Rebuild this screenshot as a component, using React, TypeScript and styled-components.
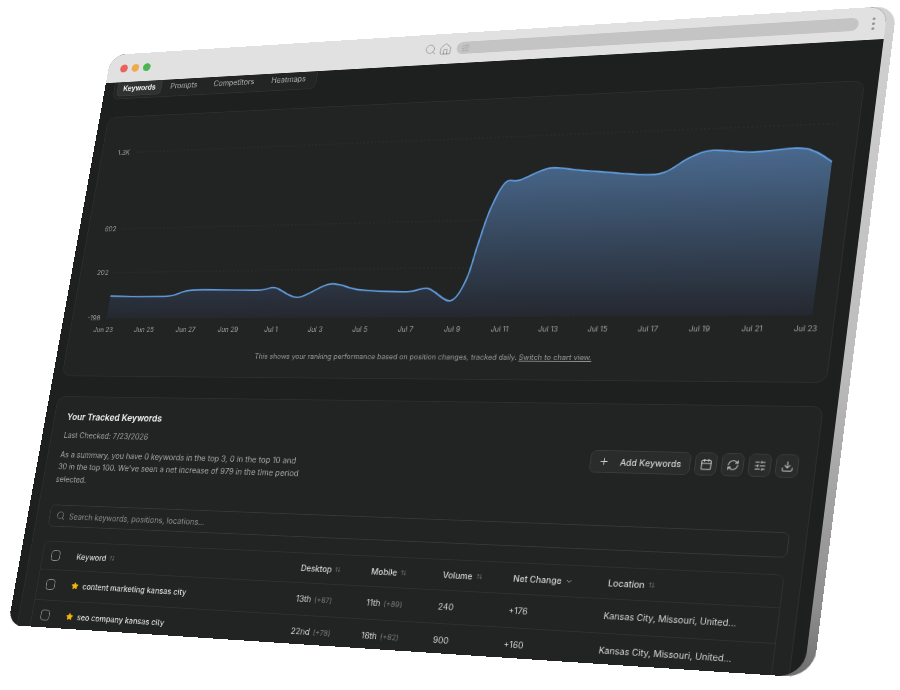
import React from "react"
import styled, { createGlobalStyle } from "styled-components"
import {
  ArrowUpDown,
  Calendar,
  ChevronDown,
  Download,
  House,
  Plus,
  RefreshCw,
  Search,
  SlidersHorizontal,
  Star,
} from "lucide-react"

const SHELL_W = 1010
const SHELL_H = 780

// where the corners of the window land on the page (tl, tr, br, bl)
const corners = [
  [111, 55],
  [897, 5.5],
  [813, 678],
  [8, 625],
]

function quadMatrix(w: number, h: number, q: number[][]) {
  const [[x0, y0], [x1, y1], [x2, y2], [x3, y3]] = q
  const dx1 = x1 - x2
  const dx2 = x3 - x2
  const sx = x0 - x1 + x2 - x3
  const dy1 = y1 - y2
  const dy2 = y3 - y2
  const sy = y0 - y1 + y2 - y3
  const den = dx1 * dy2 - dx2 * dy1
  const g = (sx * dy2 - dx2 * sy) / den
  const k = (dx1 * sy - sx * dy1) / den
  const a = x1 - x0 + g * x1
  const b = x3 - x0 + k * x3
  const d = y1 - y0 + g * y1
  const e = y3 - y0 + k * y3
  return `matrix3d(${a / w},${d / w},0,${g / w},${b / h},${e / h},0,${k / h},0,0,1,0,${x0},${y0},0,1)`
}

const GlobalStyle = createGlobalStyle`
  html, body {
    margin: 0;
    background: #fff;
    overflow: hidden;
  }
  body {
    font-family: Inter, "Liberation Sans", sans-serif;
  }
`

const Page = styled.div`
  width: 900px;
  height: 690px;
  overflow: hidden;
`

const Shell = styled.div`
  width: ${SHELL_W}px;
  height: ${SHELL_H}px;
  box-sizing: border-box;
  padding-right: 10px;
  transform-origin: 0 0;
  transform: ${quadMatrix(SHELL_W, SHELL_H, corners)};
  border-radius: 24px 24px 30px 20px;
  background: linear-gradient(180deg, #d2d2d2 0%, #bcbcbc 55%, #8d8d8d 90%, #6f6f6f 100%);
`

const Face = styled.div`
  height: 100%;
  display: flex;
  flex-direction: column;
  overflow: hidden;
  border-radius: 22px 20px 28px 20px;
  background: #1e201f;
`

const TopBar = styled.div`
  flex: none;
  height: 40px;
  display: flex;
  align-items: center;
  padding: 0 10px 0 18px;
  background: #e1e1e1;
  z-index: 1;
`

const Lights = styled.div`
  display: flex;
  gap: 6px;
`

const Light = styled.span<{ $color: string }>`
  width: 11px;
  height: 11px;
  border-radius: 50%;
  background: ${(p) => p.$color};
`

const BarIcons = styled.div`
  margin-left: auto;
  display: flex;
  align-items: center;
  gap: 3px;
  color: #8f8f8f;
`

const UrlBar = styled.div`
  flex: none;
  width: 482px;
  height: 16px;
  margin-left: 3px;
  padding-left: 6px;
  box-sizing: border-box;
  display: flex;
  align-items: center;
  border-radius: 8px;
  background: #c4c4c4;
  color: #999;
`

const Dots = styled.div`
  display: flex;
  flex-direction: column;
  gap: 3px;
  margin-left: 12px;
  margin-right: 2px;
`

const Dot = styled.span`
  width: 3px;
  height: 3px;
  border-radius: 50%;
  background: #8a8a8a;
`

const Content = styled.div`
  flex: 1;
  min-height: 0;
  padding: 0 15px 0 13px;
`

const Tabs = styled.div`
  display: flex;
  width: fit-content;
  gap: 3px;
  height: 31px;
  box-sizing: border-box;
  margin: -7px 0 0 1px;
  padding: 3px 4px;
  border: 1px solid #2f3130;
  border-radius: 8px;
  background: #232524;
`

const Tab = styled.div<{ $active?: boolean; $w: number }>`
  width: ${(p) => p.$w}px;
  display: flex;
  align-items: center;
  justify-content: center;
  border-radius: 6px;
  font-size: 10px;
  font-weight: ${(p) => (p.$active ? 600 : 400)};
  color: ${(p) => (p.$active ? "#f2f2f2" : "#b0b0b0")};
  background: ${(p) => (p.$active ? "#303231" : "transparent")};
  box-shadow: ${(p) => (p.$active ? "inset 0 0 0 1px #3a3c3b" : "none")};
`

const Card = styled.section`
  box-sizing: border-box;
  border: 1px solid #2d2f2e;
  border-radius: 12px;
  background: #222424;
`

const ChartCard = styled(Card)`
  height: 358px;
  margin-top: 25px;
  padding: 35px 15px 0;
`

const ChartSvg = styled.svg`
  display: block;
  width: 946px;
  height: 270px;
  overflow: visible;
  font-family: Inter, "Liberation Sans", sans-serif;
`

const Caption = styled.p`
  margin: 18px 0 0;
  text-align: center;
  font-size: 9px;
  line-height: 12px;
  color: #9a9a9a;
`

const CaptionLink = styled.span`
  text-decoration: underline;
`

const TableCard = styled(Card)`
  margin-top: 27px;
  padding: 19px 18px 0;
  border-bottom: 0;
  border-radius: 12px 12px 0 0;
`

const Header = styled.div`
  display: flex;
  align-items: center;
  justify-content: space-between;
`

const Title = styled.h2`
  margin: 0;
  font-size: 12px;
  line-height: 16px;
  font-weight: 600;
  color: #f3f3f3;
`

const Checked = styled.div`
  margin-top: 9px;
  font-size: 10.2px;
  line-height: 14px;
  color: #a2a2a2;
`

const Summary = styled.p`
  width: 345px;
  margin: 11px 0 0;
  font-size: 10.3px;
  line-height: 16.4px;
  color: #a6a6a6;
`

const Actions = styled.div`
  display: flex;
  gap: 5px;
`

const ActionButton = styled.div`
  height: 27px;
  min-width: 25px;
  box-sizing: border-box;
  display: flex;
  align-items: center;
  justify-content: center;
  border: 1px solid #3a3c3b;
  border-radius: 7px;
  background: #2a2c2b;
  color: #d2d2d2;
`

const AddButton = styled(ActionButton)`
  width: 116px;
  gap: 12px;
  font-size: 10.2px;
  font-weight: 500;
`

const SearchBox = styled.div`
  height: 29px;
  box-sizing: border-box;
  margin-top: 26px;
  padding-left: 9px;
  display: flex;
  align-items: center;
  gap: 6px;
  border: 1px solid #363837;
  border-radius: 7px;
  font-size: 10.3px;
  color: #8e8e8e;
`

const Table = styled.div`
  margin-top: 19px;
  border: 1px solid #2f3130;
  border-radius: 8px 8px 0 0;
`

const Row = styled.div<{ $head?: boolean }>`
  height: ${(p) => (p.$head ? 36 : 38.5)}px;
  display: grid;
  grid-template-columns: 49px 310px 91px 90px 86px 112px 1fr;
  align-items: center;
  border-top: ${(p) => (p.$head ? "0" : "1px solid #2f3130")};
  font-size: 10.2px;
  color: #d4d4d4;
`

const Check = styled.span`
  width: 13px;
  height: 14px;
  margin-left: 12px;
  box-sizing: border-box;
  border: 1px solid #8c8c8c;
  border-radius: 4px;
`

const HeadCell = styled.div`
  display: flex;
  align-items: center;
  gap: 4px;
  font-weight: 500;
  color: #d2d2d2;
`

const SortIcon = styled(ArrowUpDown)`
  color: #777;
`

const KeywordCell = styled.div`
  display: flex;
  align-items: center;
  gap: 6px;
  font-weight: 500;
  color: #dcdcdc;
`

const Delta = styled.span`
  margin-left: 4px;
  font-size: 9px;
  color: #7c7c7c;
`

const columns = ["Desktop", "Mobile", "Volume"]

const rows = [
  {
    keyword: "content marketing kansas city",
    desktop: "13th",
    desktopDelta: "(+87)",
    mobile: "11th",
    mobileDelta: "(+89)",
    volume: "240",
    net: "+176",
  },
  {
    keyword: "seo company kansas city",
    desktop: "22nd",
    desktopDelta: "(+78)",
    mobile: "18th",
    mobileDelta: "(+82)",
    volume: "900",
    net: "+160",
  },
]

const xLabels = [
  "Jun 23",
  "Jun 25",
  "Jun 27",
  "Jun 29",
  "Jul 1",
  "Jul 3",
  "Jul 5",
  "Jul 7",
  "Jul 9",
  "Jul 11",
  "Jul 13",
  "Jul 15",
  "Jul 17",
  "Jul 19",
  "Jul 21",
  "Jul 23",
]

const yLabels = [
  { text: "1.3K", y: 15 },
  { text: "602", y: 121 },
  { text: "202", y: 181 },
  { text: "-198", y: 243 },
]

const PLOT_X = 35
const PLOT_Y = 15
const PLOT_W = 896
const PLOT_H = 228

const series = [
  [0, 198], [82, 199], [118, 191], [208, 192], [232, 189], [265, 202], [306, 185],
  [347, 193], [409, 196], [435, 192], [466, 208], [482, 182], [490, 138], [499, 93],
  [513, 59], [531, 56], [566, 42], [604, 46], [677, 54], [706, 52], [733, 35],
  [759, 27], [805, 31], [855, 28], [876, 33], [896, 46],
]

function smoothLine(pts: number[][]) {
  let d = `M${pts[0][0]} ${pts[0][1]}`
  for (let i = 0; i < pts.length - 1; i++) {
    const p0 = pts[i - 1] || pts[i]
    const p1 = pts[i]
    const p2 = pts[i + 1]
    const p3 = pts[i + 2] || p2
    const c1x = p1[0] + (p2[0] - p0[0]) / 6
    const c1y = p1[1] + (p2[1] - p0[1]) / 6
    const c2x = p2[0] - (p3[0] - p1[0]) / 6
    const c2y = p2[1] - (p3[1] - p1[1]) / 6
    d += `C${c1x} ${c1y} ${c2x} ${c2y} ${p2[0]} ${p2[1]}`
  }
  return d
}

function RankChart() {
  const line = smoothLine(series)
  return (
    <ChartSvg viewBox="0 0 946 270">
      <defs>
        <linearGradient id="area" x1="0" y1="0" x2="0" y2={PLOT_H} gradientUnits="userSpaceOnUse">
          <stop offset="0.1" stopColor="#4a6a90" />
          <stop offset="0.55" stopColor="#37495f" />
          <stop offset="1" stopColor="#252830" />
        </linearGradient>
      </defs>
      {yLabels.map((l) => (
        <g key={l.text}>
          <line
            x1={PLOT_X}
            x2={PLOT_X + PLOT_W}
            y1={l.y}
            y2={l.y}
            stroke="#303231"
            strokeDasharray="2 3"
          />
          <text x={26} y={l.y + 3} textAnchor="end" fontSize="9.2" fill="#9c9c9c">
            {l.text}
          </text>
        </g>
      ))}
      <g transform={`translate(${PLOT_X} ${PLOT_Y})`}>
        <path d={`${line}L${PLOT_W} ${PLOT_H}L0 ${PLOT_H}Z`} fill="url(#area)" />
        <path d={line} fill="none" stroke="#5f9bdb" strokeWidth="2" />
      </g>
      {xLabels.map((l, i) => (
        <text key={l} x={33 + i * 59.5} y={262} textAnchor="middle" fontSize="8.8" fill="#a0a0a0">
          {l}
        </text>
      ))}
    </ChartSvg>
  )
}

export default function App() {
  return (
    <Page>
      <GlobalStyle />
      <Shell>
        <Face>
          <TopBar>
            <Lights>
              <Light $color="#ec5f5b" />
              <Light $color="#eeaa4b" />
              <Light $color="#4cb552" />
            </Lights>
            <BarIcons>
              <Search size={16} strokeWidth={1.4} />
              <House size={17} strokeWidth={1.4} />
              <UrlBar>
                <SlidersHorizontal size={11} strokeWidth={1.6} />
              </UrlBar>
              <Dots>
                <Dot />
                <Dot />
                <Dot />
              </Dots>
            </BarIcons>
          </TopBar>
          <Content>
            <Tabs>
              <Tab $active $w={66}>
                Keywords
              </Tab>
              <Tab $w={59}>Prompts</Tab>
              <Tab $w={79}>Competitors</Tab>
              <Tab $w={69}>Heatmaps</Tab>
            </Tabs>
            <ChartCard>
              <RankChart />
              <Caption>
                This shows your ranking performance based on position changes, tracked daily.{" "}
                <CaptionLink>Switch to chart view.</CaptionLink>
              </Caption>
            </ChartCard>
            <TableCard>
              <Header>
                <div>
                  <Title>Your Tracked Keywords</Title>
                  <Checked>Last Checked: 7/23/2026</Checked>
                  <Summary>
                    As a summary, you have 0 keywords in the top 3, 0 in the top 10 and 30 in the
                    top 100. We've seen a net increase of 979 in the time period selected.
                  </Summary>
                </div>
                <Actions>
                  <AddButton>
                    <Plus size={13} strokeWidth={1.8} />
                    Add Keywords
                  </AddButton>
                  <ActionButton>
                    <Calendar size={14} strokeWidth={1.7} />
                  </ActionButton>
                  <ActionButton>
                    <RefreshCw size={14} strokeWidth={1.7} />
                  </ActionButton>
                  <ActionButton>
                    <SlidersHorizontal size={14} strokeWidth={1.7} />
                  </ActionButton>
                  <ActionButton>
                    <Download size={14} strokeWidth={1.7} />
                  </ActionButton>
                </Actions>
              </Header>
              <SearchBox>
                <Search size={13} strokeWidth={1.6} />
                Search keywords, positions, locations...
              </SearchBox>
              <Table>
                <Row $head>
                  <Check />
                  <HeadCell>
                    Keyword <SortIcon size={8} />
                  </HeadCell>
                  {columns.map((c) => (
                    <HeadCell key={c}>
                      {c} <SortIcon size={8} />
                    </HeadCell>
                  ))}
                  <HeadCell>
                    Net Change <ChevronDown size={9} />
                  </HeadCell>
                  <HeadCell>
                    Location <SortIcon size={8} />
                  </HeadCell>
                </Row>
                {rows.map((r) => (
                  <Row key={r.keyword}>
                    <Check />
                    <KeywordCell>
                      <Star size={10} fill="#f5b50c" color="#f5b50c" />
                      {r.keyword}
                    </KeywordCell>
                    <div>
                      {r.desktop}
                      <Delta>{r.desktopDelta}</Delta>
                    </div>
                    <div>
                      {r.mobile}
                      <Delta>{r.mobileDelta}</Delta>
                    </div>
                    <div>{r.volume}</div>
                    <div>{r.net}</div>
                    <div>Kansas City, Missouri, United...</div>
                  </Row>
                ))}
              </Table>
            </TableCard>
          </Content>
        </Face>
      </Shell>
    </Page>
  )
}
